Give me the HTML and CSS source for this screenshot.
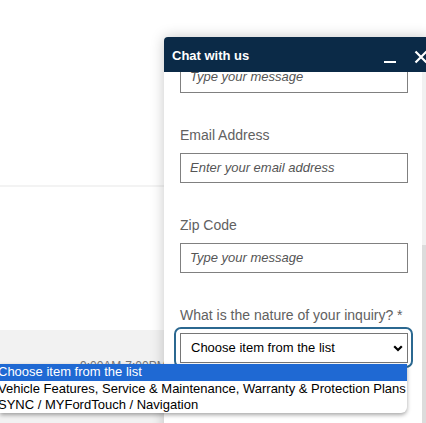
FILE: index.html
```html
<!DOCTYPE html>
<html lang="en">
<head>
<meta charset="utf-8">
<title>Chat with us</title>
<link rel="stylesheet" href="styles.css">
</head>
<body>
<div class="page">
  <div class="hero"></div>
  <div class="divider"></div>
  <div class="mid"></div>
  <div class="footer"><span class="hours">9:00AM-7:00PM</span></div>
</div>

<div class="chat">
  <div class="chat-header">
    <span class="chat-title">Chat with us</span>
    <div class="chat-controls">
      <span class="minimize"></span>
      <svg class="close" width="14" height="14" viewBox="0 0 14 14" aria-hidden="true">
        <path d="M1.5 1.5 L12.5 12.5 M12.5 1.5 L1.5 12.5" stroke="#fff" stroke-width="2.2" fill="none"/>
      </svg>
    </div>
  </div>
  <div class="chat-body">
    <div class="form">
      <div class="field">
        <div class="input input-scrolled">Type your message</div>
      </div>
      <div class="field">
        <label class="label">Email Address</label>
        <div class="input">Enter your email address</div>
      </div>
      <div class="field">
        <label class="label">Zip Code</label>
        <div class="input">Type your message</div>
      </div>
      <div class="field">
        <label class="label">What is the nature of your inquiry? *</label>
        <div class="select-ring">
          <div class="select">
            <span>Choose item from the list</span>
            <svg class="chevron" width="10" height="7" viewBox="0 0 10 7" aria-hidden="true">
              <path d="M1.2 1.2 L5 5 L8.8 1.2" stroke="#000" stroke-width="2.2" fill="none"/>
            </svg>
          </div>
        </div>
      </div>
    </div>
    <div class="scrollbar"><div class="thumb"></div></div>
  </div>
</div>

<div class="options">
  <div class="option selected">Choose item from the list</div>
  <div class="option">Vehicle Features, Service &amp; Maintenance, Warranty &amp; Protection Plans</div>
  <div class="option">SYNC / MYFordTouch / Navigation</div>
</div>
</body>
</html>
```

FILE: styles.css
```css
* { box-sizing: border-box; }

html, body {
  margin: 0;
  padding: 0;
  width: 426px;
  height: 423px;
  overflow: hidden;
  background: #ffffff;
  font-family: "Liberation Sans", Arial, sans-serif;
}

.page {
  display: flex;
  flex-direction: column;
  height: 423px;
}

.hero { height: 185px; background: #ffffff; }
.divider { height: 2px; background: #f3f3f3; }
.mid { height: 143px; background: #ffffff; }
.footer {
  flex: 1;
  background: #f2f2f2;
  padding: 26px 0 0 80px;
}
.hours {
  font-size: 12px;
  line-height: 14px;
  color: #777777;
  white-space: nowrap;
}

/* chat widget floats over the page */
.chat {
  position: absolute;
  left: 164px;
  top: 37px;
  width: 266px;
  height: 400px;
  display: flex;
  flex-direction: column;
  background: #ffffff;
  border-top-left-radius: 4px;
  box-shadow: 0 0 14px rgba(0, 0, 0, 0.22);
}

.chat-header {
  height: 35px;
  flex: none;
  display: flex;
  align-items: center;
  justify-content: space-between;
  padding: 0 0 0 8px;
  background: #0b2a47;
  border-top-left-radius: 4px;
}

.chat-title {
  color: #ffffff;
  font-weight: bold;
  font-size: 13px;
  line-height: 16px;
  padding-top: 3px;
}

.chat-controls {
  display: flex;
  align-items: center;
  gap: 18px;
  padding-top: 4px;
  padding-right: 2px;
}

.minimize {
  display: block;
  width: 12px;
  height: 2px;
  margin-top: 10px;
  background: #ffffff;
}

.close { display: block; }

.chat-body {
  flex: 1;
  display: flex;
  overflow: hidden;
}

.form {
  flex: 1;
  margin-top: -9px;
  padding: 0 14px 0 16px;
}

.field {
  display: flex;
  flex-direction: column;
  margin-bottom: 34px;
}

.label {
  font-size: 14px;
  line-height: 16px;
  color: #616161;
  margin-bottom: 10px;
  white-space: nowrap;
}

.input {
  height: 30px;
  border: 1px solid #808080;
  padding-left: 9px;
  font-size: 13px;
  line-height: 28px;
  font-style: italic;
  color: #555555;
  white-space: nowrap;
}

.input-scrolled {
  line-height: 26px;
}

.select-ring {
  margin: -6px -5px 0 -6px;
  padding: 4px 3px 3px 4px;
  border: 2px solid #2b6890;
  border-radius: 7px;
}

.select {
  height: 30px;
  border: 1px solid #767676;
  display: flex;
  align-items: center;
  justify-content: space-between;
  padding: 0 4px 0 10px;
  font-size: 13px;
  line-height: 28px;
  color: #000000;
  white-space: nowrap;
  background: #ffffff;
}

.chevron { display: block; margin-top: 1px; }

.scrollbar {
  width: 8px;
  flex: none;
  background: #f1f1f1;
  display: flex;
  flex-direction: column;
  padding-top: 173px;
}

.thumb {
  flex: 1;
  background: #dcdcdc;
}

/* native select popup overlays the page */
.options {
  position: absolute;
  left: 0;
  top: 364px;
  width: 407px;
  background: #ffffff;
  border-bottom-right-radius: 6px;
  box-shadow: 0 2px 4px rgba(0, 0, 0, 0.35);
  overflow: hidden;
}

.option {
  height: 16px;
  font-size: 13px;
  line-height: 15px;
  color: #000000;
  white-space: nowrap;
  text-indent: -2px;
}

.option.selected {
  height: 17px;
  line-height: 16px;
  background: #1f69d3;
  color: #ffffff;
}
```
